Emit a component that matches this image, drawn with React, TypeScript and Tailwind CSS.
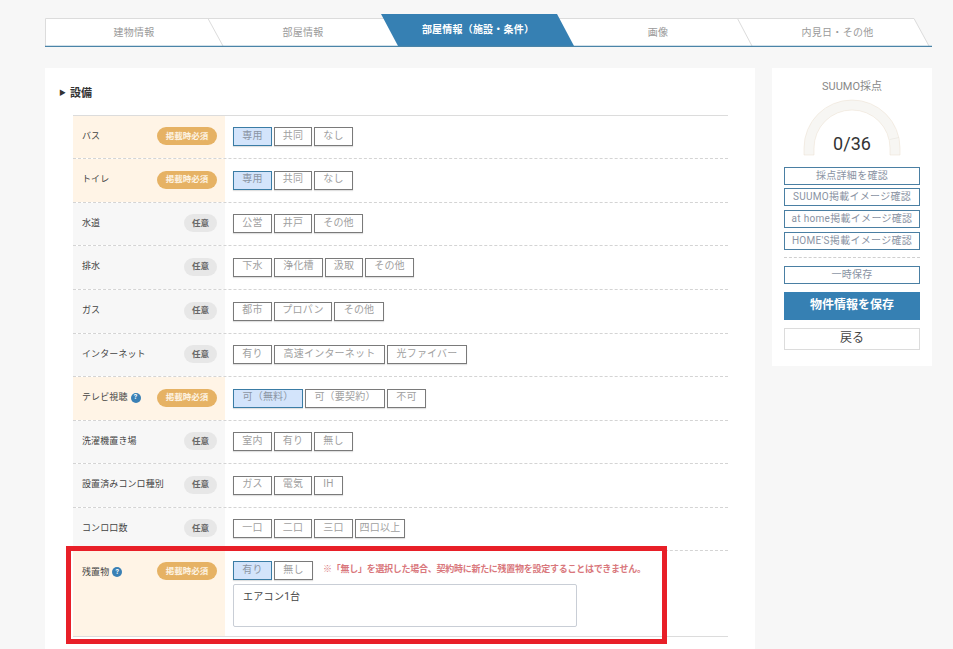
const FONT = '"Roboto","Noto Sans CJK JP",sans-serif';

type Row = {
  label: string;
  req: boolean;
  help?: boolean;
  h: string;
  opts: { t: string; w: string; on?: boolean }[];
};

const rows: Row[] = [
  { label: "バス", req: true, h: "h-[43px]", opts: [{ t: "専用", w: "w-[39px]", on: true }, { t: "共同", w: "w-[38px]" }, { t: "なし", w: "w-[39px]" }] },
  { label: "トイレ", req: true, h: "h-[44px]", opts: [{ t: "専用", w: "w-[39px]", on: true }, { t: "共同", w: "w-[38px]" }, { t: "なし", w: "w-[39px]" }] },
  { label: "水道", req: false, h: "h-[43px]", opts: [{ t: "公営", w: "w-[39px]" }, { t: "井戸", w: "w-[38px]" }, { t: "その他", w: "w-[49px]" }] },
  { label: "排水", req: false, h: "h-[44px]", opts: [{ t: "下水", w: "w-[39px]" }, { t: "浄化槽", w: "w-[49px]" }, { t: "汲取", w: "w-[38px]" }, { t: "その他", w: "w-[49px]" }] },
  { label: "ガス", req: false, h: "h-[44px]", opts: [{ t: "都市", w: "w-[39px]" }, { t: "プロパン", w: "w-[58px]" }, { t: "その他", w: "w-[50px]" }] },
  { label: "インターネット", req: false, h: "h-[43px]", opts: [{ t: "有り", w: "w-[39px]" }, { t: "高速インターネット", w: "w-[111px]" }, { t: "光ファイバー", w: "w-[80px]" }] },
  { label: "テレビ視聴", req: true, help: true, h: "h-[44px]", opts: [{ t: "可（無料）", w: "w-[70px]", on: true }, { t: "可（要契約）", w: "w-[80px]" }, { t: "不可", w: "w-[39px]" }] },
  { label: "洗濯機置き場", req: false, h: "h-[43px]", opts: [{ t: "室内", w: "w-[39px]" }, { t: "有り", w: "w-[38px]" }, { t: "無し", w: "w-[39px]" }] },
  { label: "設置済みコンロ種別", req: false, h: "h-[44px]", opts: [{ t: "ガス", w: "w-[39px]" }, { t: "電気", w: "w-[38px]" }, { t: "IH", w: "w-[29px]" }] },
  { label: "コンロ口数", req: false, h: "h-[43px]", opts: [{ t: "一口", w: "w-[39px]" }, { t: "二口", w: "w-[38px]" }, { t: "三口", w: "w-[39px]" }, { t: "四口以上", w: "w-[50px]" }] },
];

function Opt({ t, w, on }: { t: string; w: string; on?: boolean }) {
  return (
    <span
      className={`flex h-[19px] items-center justify-center whitespace-nowrap border pb-[2px] text-[10px] leading-none tracking-[0.2px] shadow-[0_1px_1px_rgba(0,0,0,0.12)] ${w} ${
        on ? "border-[#3a7ca5] bg-[#d3e4fb] text-[#8b95a3]" : "border-[#7a7a7a] bg-white text-[#a0a0a0]"
      }`}
    >
      {t}
    </span>
  );
}

function Help() {
  return (
    <span className="ml-[3px] flex h-[10px] w-[10px] items-center justify-center rounded-full bg-[#3a80b5] text-[7px] font-bold leading-none text-white">
      ?
    </span>
  );
}

function Badge({ req }: { req: boolean }) {
  return req ? (
    <span className="mb-[2px] flex h-[18px] w-[60px] items-center justify-center rounded-full bg-[#e6b264] text-[8.5px] font-bold leading-none text-[#fdf3e2]">
      掲載時必須
    </span>
  ) : (
    <span className="mb-[2px] flex h-[18px] w-[33px] items-center justify-center rounded-full bg-[#e7e7e7] text-[8.5px] font-bold leading-none text-[#666]">
      任意
    </span>
  );
}

function Label({ r }: { r: { label: string; help?: boolean; req: boolean } }) {
  return (
    <span className="flex items-center pb-[2px] text-[9px] leading-none tracking-[0.1px] text-[#444]">
      {r.label}
      {r.help && <Help />}
    </span>
  );
}

function FormRow({ r }: { r: Row }) {
  return (
    <div className={`flex border-b border-dashed border-[#d4d4d4] ${r.h}`}>
      <div className={`flex w-[152px] items-center justify-between pl-[9px] pr-[8px] ${r.req ? "bg-[#fff4e6]" : "bg-[#f7f7f7]"}`}>
        <Label r={r} />
        <Badge req={r.req} />
      </div>
      <div className="flex items-center gap-[2px] pb-[1px] pl-[8px]">
        {r.opts.map((o) => (
          <Opt key={o.t} {...o} />
        ))}
      </div>
    </div>
  );
}

function Tabs() {
  const labels = [
    { t: "建物情報", w: "w-[178px]" },
    { t: "部屋情報", w: "w-[160px]" },
    { t: "部屋情報（施設・条件）", w: "w-[190px]", on: true },
    { t: "画像", w: "w-[170px]" },
    { t: "内見日・その他", w: "w-[189px]" },
  ];
  return (
    <div className="relative ml-[45px] h-[33px] w-[887px]">
      <svg className="absolute left-0 top-0" width="887" height="33" viewBox="0 0 887 33">
        <polygon points="0,4.5 869,4.5 884,32 0,32" fill="#fff" stroke="none" />
        <path d="M0.5 32V4.5H869L884 32" fill="none" stroke="#dcdcdc" />
        <path d="M163 4.5L178 32M692.5 4.5L707 32" fill="none" stroke="#dcdcdc" />
        <polygon points="336,0 512,0 529,32 353,32" fill="#3680b3" />
        <path d="M0 32.5H887" stroke="#4a84a8" strokeWidth="1.5" />
      </svg>
      <div className="relative flex h-[32px]">
        {labels.map((l) => (
          <div
            key={l.t}
            className={`flex items-center justify-center text-[10px] leading-none ${l.w} ${
              l.on ? "pb-[1px] font-bold tracking-[0.2px] text-white" : "pt-[6px] tracking-[0.3px] text-[#9a9a9a]"
            }`}
          >
            {l.t}
          </div>
        ))}
      </div>
    </div>
  );
}

function Gauge() {
  return (
    <div className="relative mx-auto h-[57px] w-[98px]">
      <svg className="absolute left-0 top-0" width="98" height="57" viewBox="0 0 98 57">
        <path
          d="M1 56V49A48 48 0 0 1 97 49V56H87V49A38 38 0 0 0 11 49V56Z"
          fill="#f7f6f3"
          stroke="#eadfce"
          strokeWidth="0.5"
        />
        <path d="M86.8 40.5L96 38.5" stroke="#e4e0d8" strokeWidth="0.5" />
      </svg>
      <span className="absolute inset-x-0 bottom-[1px] text-center text-[18px] leading-[22px] text-[#333]">0/36</span>
    </div>
  );
}

function SideLink({ t, extra = "" }: { t: string; extra?: string }) {
  return (
    <div className={`flex h-[18px] items-center justify-center whitespace-nowrap border-[1.5px] border-[#4a7fa3] bg-white pb-[1px] text-[10px] leading-none tracking-[0.3px] text-[#8a93a3] ${extra}`}>
      {t}
    </div>
  );
}

export default function App() {
  return (
    <div className="relative h-[649px] w-[953px] overflow-hidden bg-[#f7f7f7]" style={{ fontFamily: FONT }}>
      <div className="pt-[14px]">
        <Tabs />
        <div className="ml-[45px] mt-[21px] flex items-start gap-[17px]">
          <main className="h-[600px] w-[710px] bg-white pl-[28px]">
            <h2 className="-ml-[14px] flex h-[47px] items-center pt-[3px] text-[11px] font-bold leading-none text-[#333]">
              <span className="mr-[4px] text-[7px]">▶</span>設備
            </h2>
            <div className="w-[655px] border-t border-[#dcdcdc]">
              {rows.map((r) => (
                <FormRow key={r.label} r={r} />
              ))}
              <div className="flex h-[86px] border-b border-[#dcdcdc]">
                <div className="flex w-[152px] items-start justify-between bg-[#fff4e6] pl-[9px] pr-[8px] pt-[11px]">
                  <span className="pt-[5px]">
                    <Label r={{ label: "残置物", help: true, req: true }} />
                  </span>
                  <Badge req />
                </div>
                <div className="pl-[8px] pt-[10px]">
                  <div className="flex items-center gap-[2px]">
                    <Opt t="有り" w="w-[39px]" on />
                    <Opt t="無し" w="w-[39px]" />
                    <span className="ml-[8px] whitespace-nowrap pb-[2px] text-[9px] font-bold leading-none tracking-[-0.27px] text-[#d9777c]">
                      ※「無し」を選択した場合、契約時に新たに残置物を設定することはできません。
                    </span>
                  </div>
                  <div className="mt-[4px] h-[43px] w-[344px] rounded-[2px] border border-[#c9ced6] bg-white px-[9px] pt-[7px] text-[10px] leading-none tracking-[0.3px] text-[#444]">
                    エアコン1台
                  </div>
                </div>
              </div>
            </div>
          </main>
          <aside className="h-[298px] w-[160px] bg-white px-[12px] pt-[13px]">
            <p className="mb-[6px] text-center text-[11px] leading-[12px] text-[#888]">SUUMO採点</p>
            <Gauge />
            <div className="mt-[11px] flex flex-col gap-[4px]">
              <SideLink t="採点詳細を確認" extra="-mb-[1px]" />
              <SideLink t="SUUMO掲載イメージ確認" />
              <SideLink t="at home掲載イメージ確認" />
              <SideLink t="HOME'S掲載イメージ確認" />
            </div>
            <div className="mt-[7px] border-t border-dashed border-[#cfcfcf]" />
            <div className="mt-[8px]">
              <SideLink t="一時保存" />
            </div>
            <div className="mt-[8px] flex h-[28px] items-center justify-center bg-[#3680b3] pb-[2px] text-[12px] font-bold leading-none text-white">
              物件情報を保存
            </div>
            <div className="mt-[8px] flex h-[22px] items-center justify-center border-[1.5px] border-[#dcdcdc] bg-white pb-[2px] text-[12px] leading-none text-[#444]">
              戻る
            </div>
          </aside>
        </div>
      </div>
      <div className="absolute left-[66px] top-[546px] h-[98px] w-[601px] border-[5px] border-[#e81f28]" />
    </div>
  );
}
